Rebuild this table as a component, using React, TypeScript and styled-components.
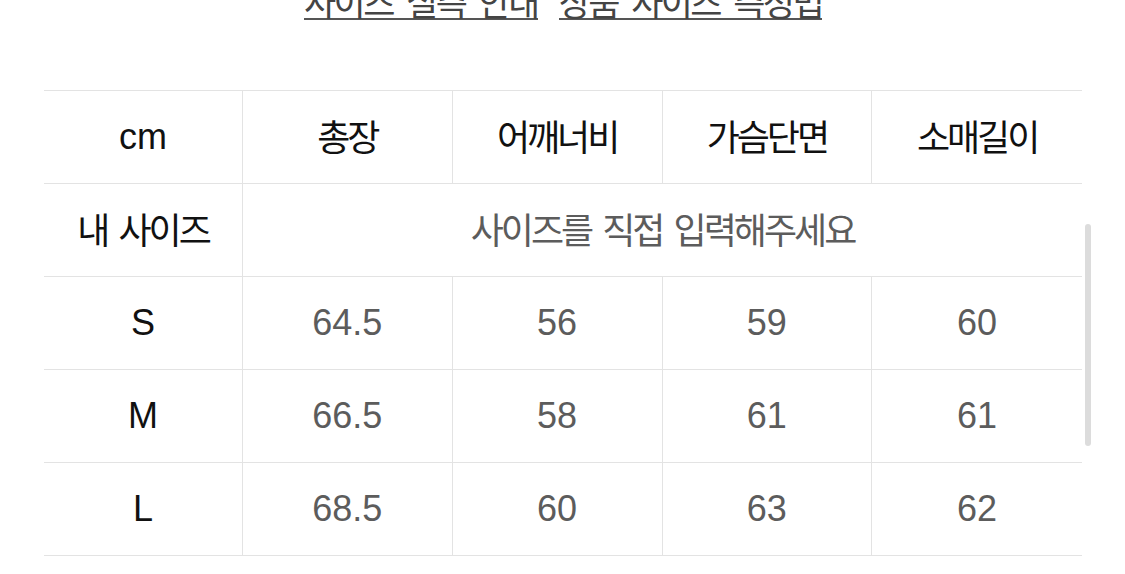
import React from "react";
import styled, { createGlobalStyle } from "styled-components";

const GlobalStyle = createGlobalStyle`
  html, body {
    margin: 0;
    padding: 0;
    background: #ffffff;
    overflow: hidden;
  }
  body {
    font-family: "Liberation Sans", "Noto Sans CJK KR", sans-serif;
    color: #111111;
  }
`;

const Page = styled.div`
  position: relative;
  width: 1125px;
  height: 574px;
  padding: 0 43px 0 44px;
  box-sizing: border-box;
  overflow: hidden;
`;

const LinkRow = styled.div`
  display: flex;
  justify-content: center;
  align-items: flex-end;
  gap: 21px;
  height: 20px;
`;

const GuideLink = styled.a`
  display: block;
  font-family: "Noto Sans CJK KR", sans-serif;
  font-size: 35px;
  letter-spacing: -2.6px;
  word-spacing: 8px;
  line-height: 34px;
  color: #444444;
  text-decoration: none;
  border-bottom: 2px solid #555555;
  white-space: nowrap;
`;

const Table = styled.div`
  display: grid;
  grid-template-columns: 199px repeat(4, 1fr);
  grid-auto-rows: 93px;
  margin-top: 70px;
  border-top: 1px solid #e3e3e3;
`;

const Cell = styled.div<{ $last?: boolean; $span?: number }>`
  display: flex;
  align-items: center;
  justify-content: center;
  border-bottom: 1px solid #e3e3e3;
  border-right: ${(p) => (p.$last ? "none" : "1px solid #e3e3e3")};
  grid-column: ${(p) => (p.$span ? `span ${p.$span}` : "auto")};
  min-width: 0;
`;

const Label = styled.span<{ $ko?: boolean; $muted?: boolean }>`
  font-family: ${(p) =>
    p.$ko ? `"Noto Sans CJK KR", sans-serif` : `"Liberation Sans", sans-serif`};
  font-size: 36px;
  letter-spacing: ${(p) => (p.$ko ? "-3px" : "0")};
  word-spacing: ${(p) => (p.$ko ? "6px" : "0")};
  padding-bottom: ${(p) => (p.$ko ? "4px" : "0")};
  color: ${(p) => (p.$muted ? "#5c5c5c" : "#111111")};
  white-space: nowrap;
  line-height: 1;
`;

const Scrollbar = styled.div`
  position: absolute;
  left: 1085px;
  top: 224px;
  width: 6px;
  height: 222px;
  border-radius: 3px;
  background: #dcdcdc;
`;

const headers = ["총장", "어깨너비", "가슴단면", "소매길이"];
const rows: { size: string; values: string[] }[] = [
  { size: "S", values: ["64.5", "56", "59", "60"] },
  { size: "M", values: ["66.5", "58", "61", "61"] },
  { size: "L", values: ["68.5", "60", "63", "62"] },
];

export default function App() {
  return (
    <>
      <GlobalStyle />
      <Page>
        <LinkRow>
          <GuideLink>사이즈 실측 안내</GuideLink>
          <GuideLink>상품 사이즈 측정법</GuideLink>
        </LinkRow>
        <Table>
          <Cell>
            <Label>cm</Label>
          </Cell>
          {headers.map((h, i) => (
            <Cell key={h} $last={i === headers.length - 1}>
              <Label $ko>{h}</Label>
            </Cell>
          ))}
          <Cell>
            <Label $ko>내 사이즈</Label>
          </Cell>
          <Cell $span={4} $last>
            <Label $ko $muted>
              사이즈를 직접 입력해주세요
            </Label>
          </Cell>
          {rows.map((r) => (
            <React.Fragment key={r.size}>
              <Cell>
                <Label>{r.size}</Label>
              </Cell>
              {r.values.map((v, i) => (
                <Cell key={i} $last={i === r.values.length - 1}>
                  <Label $muted>{v}</Label>
                </Cell>
              ))}
            </React.Fragment>
          ))}
        </Table>
        <Scrollbar />
      </Page>
    </>
  );
}
